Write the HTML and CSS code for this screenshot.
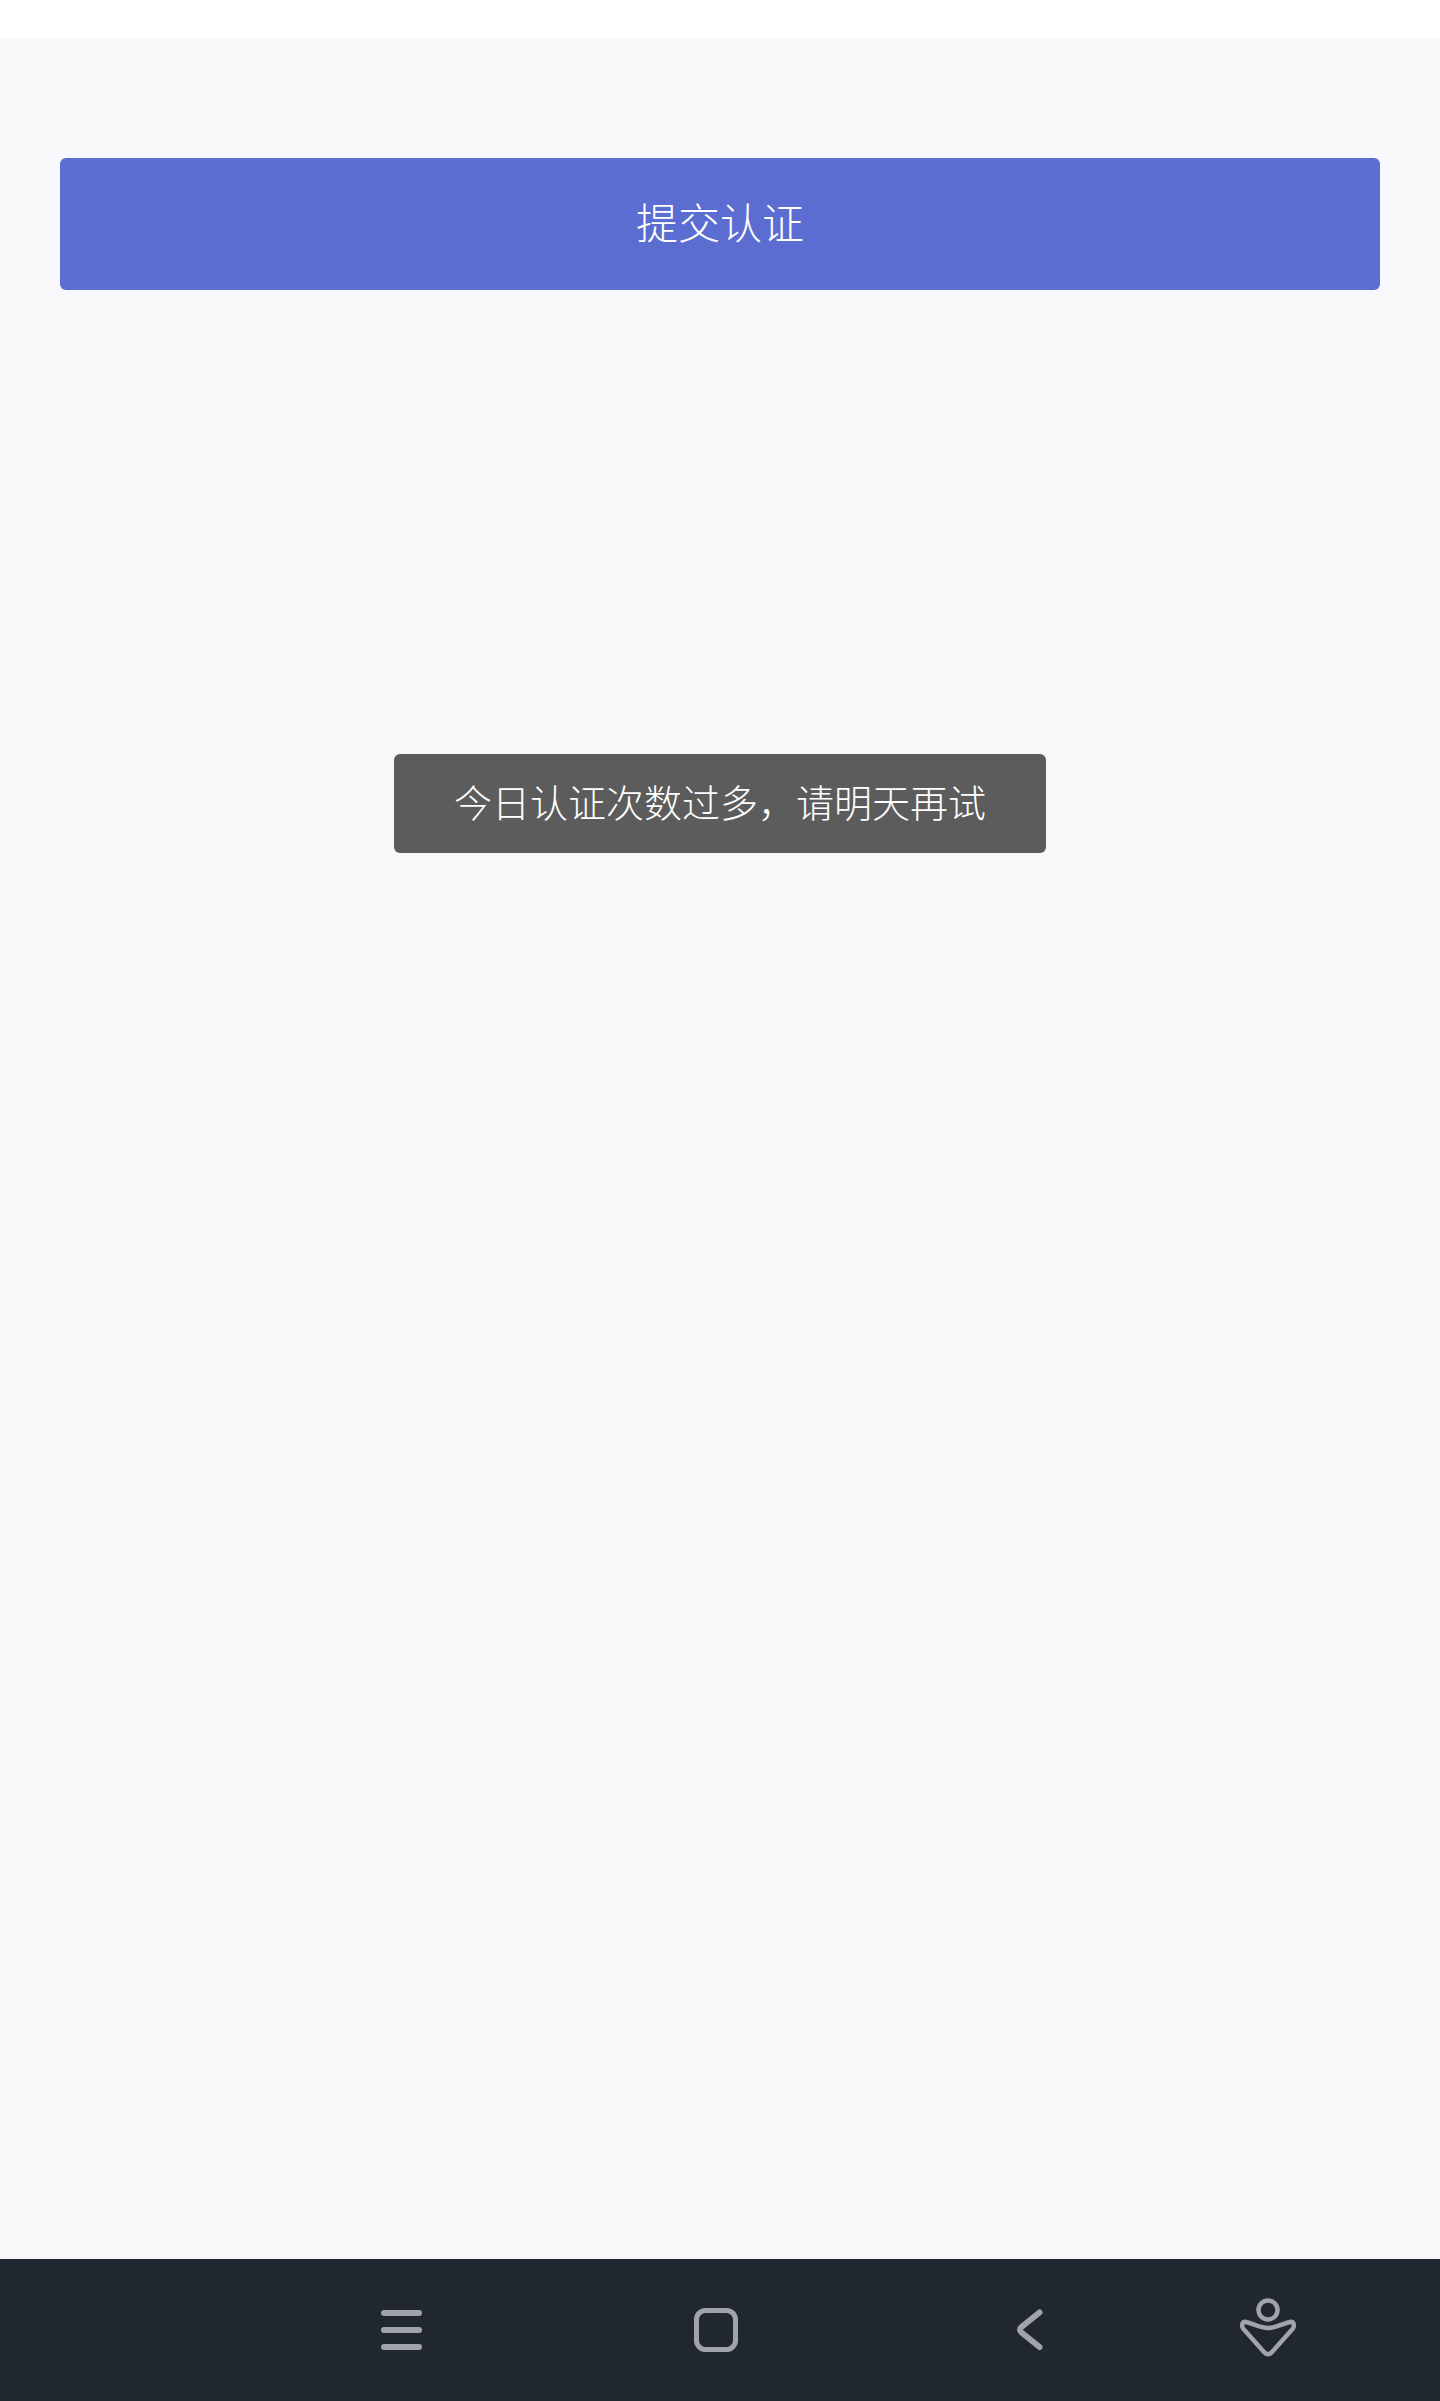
FILE: index.html
```html
<!DOCTYPE html>
<html lang="zh-CN">
<head>
    <meta charset="UTF-8">
    <meta name="viewport" content="width=device-width, initial-scale=1.0">
    <title>提交认证</title>
    <link rel="stylesheet" href="styles.css">
</head>
<body>
    <div class="status-bar"></div>

    <main class="content">
        <button class="submit-btn">提交认证</button>
    </main>

    <div class="toast">今日认证次数过多，请明天再试</div>

    <nav class="nav-bar">
        <svg class="nav-icon nav-menu" viewBox="0 0 64 64">
            <path d="M15 15H50M15 32H50M15 49H50"/>
        </svg>
        <svg class="nav-icon nav-home" viewBox="0 0 64 64">
            <rect x="12.5" y="12.5" width="39" height="39" rx="9"/>
        </svg>
        <svg class="nav-icon nav-back" viewBox="0 0 64 64">
            <path d="M42.5 14.5L24.5 29C22.5 30.7 22.5 32.8 24.5 34.5L42.5 49"/>
        </svg>
        <svg class="nav-icon nav-person" viewBox="0 0 64 64">
            <circle cx="32" cy="12" r="9.5"/>
            <path d="M10 24C18 26 24 30 32 30C40 30 46 26 54 24C58 23 59 28 56.5 31L36 54C33.5 57 30.5 57 28 54L7.5 31C5 28 6 23 10 24Z"/>
        </svg>
    </nav>
</body>
</html>
```

FILE: styles.css
```css
:root {
    --bg-color: #f8f8fb;
    --primary-color: #5b6dd1;
    --toast-bg: #5c5c5c;
    --nav-bg: #212731;
    --nav-icon: #a0a3a9;
}

body {
    display: flex;
    flex-direction: column;
    min-height: 100vh;
    margin: 0;
    background-color: #ffffff;
    font-family: 'Noto Sans CJK SC', 'Noto Sans', sans-serif;
}

.status-bar {
    height: 38px;
    background-color: #ffffff;
}

.content {
    flex: 1;
    padding: 120px 60px 0;
    background-color: var(--bg-color);
}

.submit-btn {
    display: block;
    width: 100%;
    height: 132px;
    padding: 0 0 8px;
    background-color: var(--primary-color);
    color: #ffffff;
    border: none;
    border-radius: 6px;
    font-family: inherit;
    font-size: 42px;
    font-weight: 300;
}

/* Floats over the page */
.toast {
    position: absolute;
    top: 754px;
    left: 50%;
    transform: translateX(-50%);
    height: 99px;
    padding: 0 60px;
    background-color: var(--toast-bg);
    color: #ffffff;
    border-radius: 6px;
    font-size: 38px;
    font-weight: 300;
    line-height: 93px;
    white-space: nowrap;
}

.nav-bar {
    display: flex;
    align-items: center;
    height: 142px;
    padding-left: 369px;
    background-color: var(--nav-bg);
}

.nav-icon {
    width: 64px;
    height: 64px;
    fill: none;
    stroke: var(--nav-icon);
    stroke-linecap: round;
    stroke-linejoin: round;
}

.nav-menu {
    stroke-width: 6;
}

.nav-home {
    margin-left: 251px;
    stroke-width: 5;
}

.nav-back {
    margin-left: 249px;
    stroke-width: 6;
}

.nav-person {
    margin-left: 175px;
    stroke-width: 4.5;
}
```
